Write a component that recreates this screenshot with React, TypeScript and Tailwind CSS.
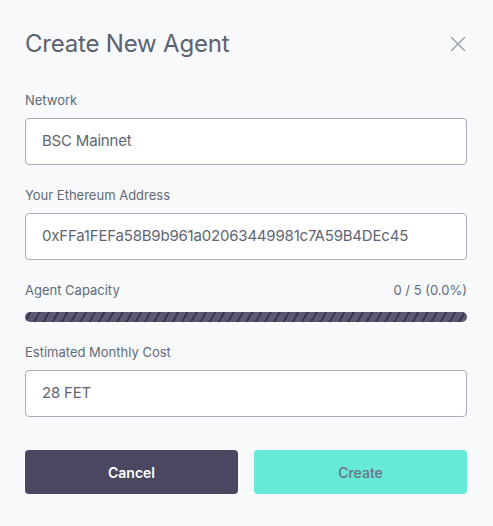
const FONT = "font-['Inter','Liberation_Sans',sans-serif]";

function Field({ label, value }: { label: string; value: string }) {
  return (
    <div className="flex flex-col">
      <label className="text-[13px] leading-4 text-[#626b78]">{label}</label>
      <div className="mt-[10px] flex h-[47px] items-center rounded-[4px] border border-[#a9abb9] bg-white px-4 text-[15px] tracking-[-0.2px] text-[#5e6573]">
        {value}
      </div>
    </div>
  );
}

export default function App() {
  return (
    <div className={`${FONT} min-h-[526px] w-full bg-[#f8f9fb] pl-[25px] pr-[26px] pt-[28px]`}>
      <div className="flex items-center justify-between">
        <h1 className="text-[24px] leading-8 font-normal tracking-[-0.2px] text-[#5a6270]">Create New Agent</h1>
        <svg width="16" height="16" viewBox="0 0 16 16" className="mr-[1px]">
          <path d="M1 1L15 15M15 1L1 15" stroke="#9aa0ab" strokeWidth="1.4" />
        </svg>
      </div>

      <div className="mt-[32px] flex flex-col gap-[22px]">
        <Field label="Network" value="BSC Mainnet" />
        <Field label="Your Ethereum Address" value="0xFFa1FEFa58B9b961a02063449981c7A59B4DEc45" />

        <div className="flex flex-col">
          <div className="flex items-center justify-between text-[13px] leading-4 text-[#626b78]">
            <span>Agent Capacity</span>
            <span>0 / 5 (0.0%)</span>
          </div>
          <div className="mt-[14px] h-[10px] w-full rounded-full bg-[repeating-linear-gradient(-60deg,#5c5772_0px,#5c5772_6px,#3b3650_6px,#3b3650_8px)]" />
        </div>

        <Field label="Estimated Monthly Cost" value="28 FET" />
      </div>

      <div className="mt-[33px] flex gap-4">
        <button className="h-[44px] flex-1 rounded-[4px] bg-[#4b4760] text-[14px] font-semibold text-white">Cancel</button>
        <button className="h-[44px] flex-1 rounded-[4px] bg-[#66e9d6] text-[14px] font-medium text-[#6b7280]">Create</button>
      </div>
    </div>
  );
}
